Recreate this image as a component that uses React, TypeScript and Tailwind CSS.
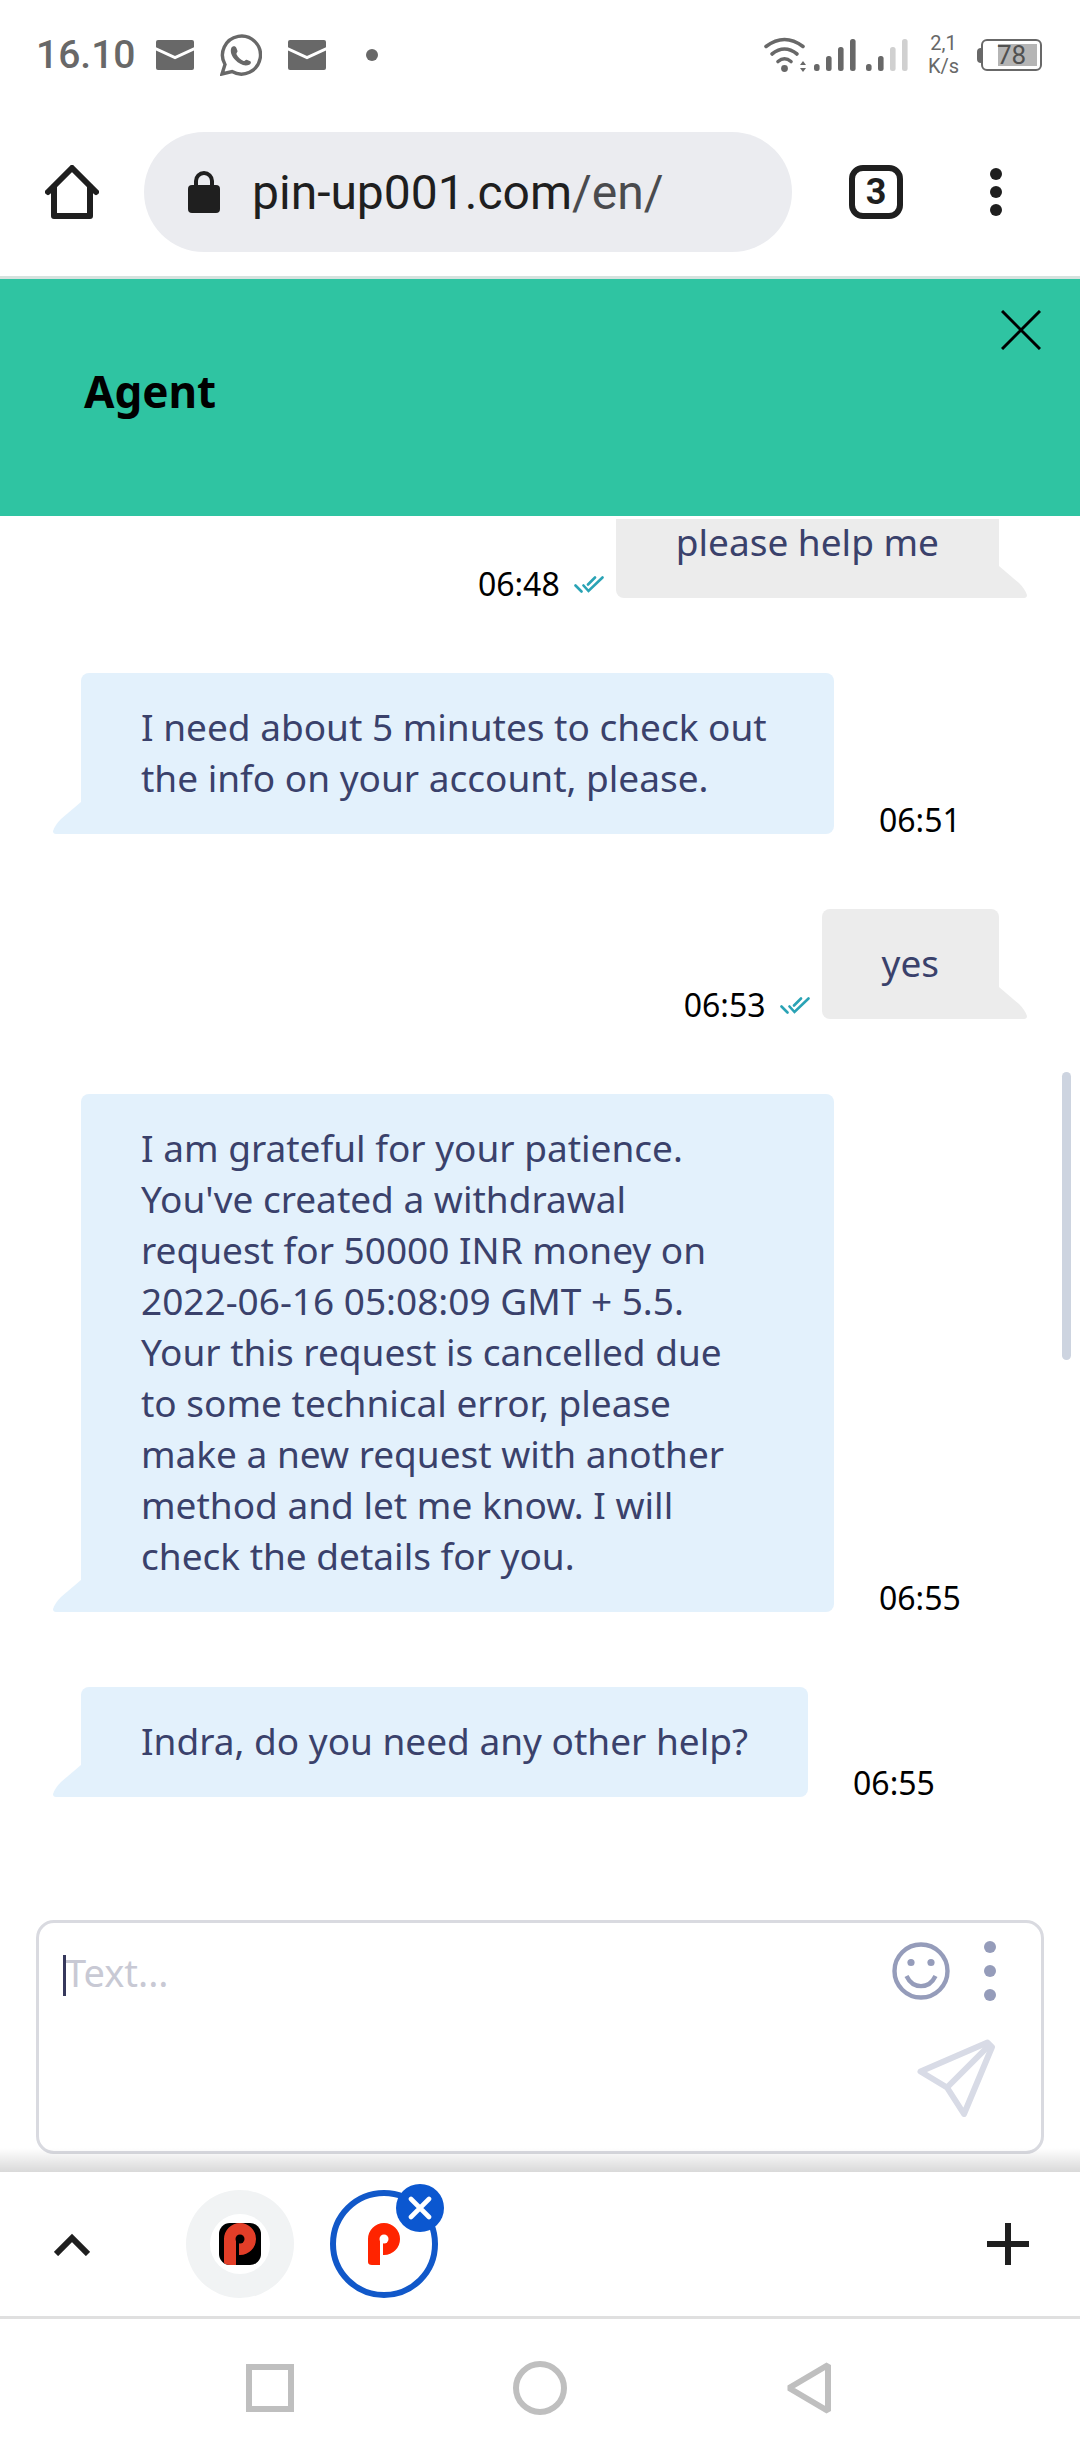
import type { ReactNode } from "react";

// Status Bar
// ━━━━━━━━━━━━━━━━━━━━━━━━━━━━━━━━━━━━━━━━━━━━━━━━━━━━━━━━━━━━━━━━━━━━━━

function MailIcon() {
  return (
    <svg className="w-[38px] h-[30px]" viewBox="0 0 38 30" fill="none">
      <rect width="38" height="30" rx="2" fill="#686868" />
      <path d="M-1 8.500L19 17.500L39 8.500" stroke="#fff" strokeWidth={3} />
    </svg>
  );
}

function WhatsAppIcon() {
  return (
    <svg className="w-[42px] h-[42px]" viewBox="0 0 42 42" fill="none">
      <path
        d="M2 40L5 30.500A19 19 0 1 1 12 37.500Z"
        stroke="#686868"
        strokeWidth={3.4}
      />
      <path
        d="M11.500 13.500c1.500-2 4.200-1.700 4.800.2l1.200 3.300c.4 1.200-1.500 2-1 3.200 1.500 3 4 5.500 7 6.800 1.100.4 2-1.700 3.200-1.300l3.600 1.600c1.200.8.6 2.600-1 3.400-4.800 2-10-.5-14-4.600-3.800-4-5.600-9-3.800-12.600z"
        fill="#686868"
      />
    </svg>
  );
}

function WifiIcon() {
  return (
    <svg className="w-[44px] h-[36px]" viewBox="0 0 44 36" fill="none">
      <g stroke="#686868" strokeWidth={3.6} strokeLinecap="round">
        <path d="M2 9.500Q20.500 -4.500 39 9.500" />
        <path d="M8 17Q20.500 7 33 17" />
        <path d="M14 24.500Q20.500 19 27 24.500" />
      </g>
      <circle cx="20.500" cy="31.500" r="3.400" fill="#686868" />
      <path d="M36 28l3-4 3 4zM36 31h6l-3 4z" fill="#686868" />
    </svg>
  );
}

function SignalIcon({ level }: { level: number }) {
  const heights = [7, 15, 24, 32];
  return (
    <svg className="w-[42px] h-[32px]" viewBox="0 0 42 32">
      {heights.map((h, i) => (
        <rect
          key={h}
          x={i * 12}
          y={32 - h}
          width="5.600"
          height={h}
          rx="2.500"
          fill={i < level ? "#686868" : "#d0d0d0"}
        />
      ))}
    </svg>
  );
}

function StatusBar() {
  return (
    <div className="flex h-[108px] shrink-0 items-center pt-[2px] pl-9 pr-[38px] font-[Roboto,sans-serif] text-[#686868]">
      <span className="text-[39px] leading-[48px] font-medium">16.10</span>
      <div className="ml-5 flex items-center gap-[26px]">
        <MailIcon />
        <WhatsAppIcon />
        <MailIcon />
      </div>
      <div className="ml-10 h-3 w-3 rounded-full bg-[#686868]" />
      <div className="ml-auto flex items-center">
        <WifiIcon />
        <div className="ml-[6px] flex items-center gap-[10px]">
          <SignalIcon level={4} />
          <SignalIcon level={2} />
        </div>
        <div className="ml-5 text-center text-[20px] leading-[23px]">
          <div>2,1</div>
          <div>K/s</div>
        </div>
        <div className="ml-[18px] flex items-center">
          <div className="h-[15px] w-1 rounded-l-sm bg-[#686868]" />
          <div className="relative h-8 w-[61px] rounded-md border-2 border-[#686868]">
            <div className="absolute inset-y-[3px] right-[3px] w-[39px] bg-[#b5b5b5]" />
            <div className="relative text-center text-[26px] leading-7 text-[#505050]">78</div>
          </div>
        </div>
      </div>
    </div>
  );
}

// Browser Toolbar
// ━━━━━━━━━━━━━━━━━━━━━━━━━━━━━━━━━━━━━━━━━━━━━━━━━━━━━━━━━━━━━━━━━━━━━━

function BrowserToolbar() {
  return (
    <div className="flex shrink-0 items-center border-b-[3px] border-[#d5e2de] py-6 pl-[45px] pr-[78px] font-[Roboto,sans-serif] text-[#1f1f1f]">
      <button type="button" aria-label="Home">
        <svg className="w-[54px] h-[54px]" viewBox="0 0 54 54" fill="none" stroke="currentColor" strokeWidth={6} strokeLinecap="round" strokeLinejoin="round">
          <path d="M3 27L27 3L51 27" />
          <path d="M9 22V51H45V22" />
        </svg>
      </button>
      <button type="button" className="ml-[45px] flex h-[120px] flex-1 items-center rounded-full bg-[#ebecf0] pl-11">
        <svg className="w-8 h-[42px]" viewBox="0 0 32 42" fill="none">
          <rect y="14" width="32" height="28" rx="4" fill="currentColor" />
          <path d="M8 16V10a8 8 0 0 1 16 0v6" stroke="currentColor" strokeWidth={4} />
        </svg>
        <span className="ml-8 pt-[2px] text-[48px] leading-[56px]">
          pin-up001.com<span className="text-[#4a4b4e]">/en/</span>
        </span>
      </button>
      <button type="button" aria-label="Tabs" className="ml-[57px] flex h-[54px] w-[54px] items-center justify-center rounded-[14px] border-6 border-[#1f1f1f] text-[36px] leading-[42px] font-bold">
        3
      </button>
      <button type="button" aria-label="Menu" className="ml-[87px] flex flex-col gap-[6px]">
        <span className="h-3 w-3 rounded-full bg-[#1f1f1f]" />
        <span className="h-3 w-3 rounded-full bg-[#1f1f1f]" />
        <span className="h-3 w-3 rounded-full bg-[#1f1f1f]" />
      </button>
    </div>
  );
}

// Chat
// ━━━━━━━━━━━━━━━━━━━━━━━━━━━━━━━━━━━━━━━━━━━━━━━━━━━━━━━━━━━━━━━━━━━━━━

interface Message {
  text: string;
  time: string;
  mine?: boolean;
}

const messages: Message[] = [
  { text: "please help me", time: "06:48", mine: true },
  { text: "I need about 5 minutes to check out the info on your account, please.", time: "06:51" },
  { text: "yes", time: "06:53", mine: true },
  {
    text: `I am grateful for your patience. You've created a withdrawal
request for 50000 INR money on
2022-06-16 05:08:09 GMT + 5.5.
Your this request is cancelled due
to some technical error, please
make a new request with another
method and let me know. I will
check the details for you.`,
    time: "06:55",
  },
  { text: "Indra, do you need any other help?", time: "06:55" },
];

function ChatHeader() {
  return (
    <header className="relative shrink-0 bg-[#2fc4a2] pt-20 pb-[93px] pl-[84px]">
      <h1 className="text-[44px] leading-[64px] font-bold text-black">Agent</h1>
      <button type="button" aria-label="Close" className="absolute top-[31px] right-[39px]">
        <svg className="w-10 h-10" viewBox="0 0 40 40" stroke="#000" strokeWidth={3}>
          <path d="M1 1L39 39M39 1L1 39" />
        </svg>
      </button>
    </header>
  );
}

function ReadTicks() {
  return (
    <svg className="w-[30px] h-[17px]" viewBox="0 0 30 17" fill="none" stroke="#2aa3b5" strokeWidth={2.6} strokeLinecap="round">
      <path d="M1.500 9.500L7.500 15.500M9.500 9.500L14.500 15L28.500 1.500M14 8.500L21 1.500" />
    </svg>
  );
}

function Bubble({ mine, children }: { mine?: boolean; children: ReactNode }) {
  return (
    <div
      className={`relative max-w-[753px] rounded-lg px-[60px] pt-7 pb-[31px] text-[37px] leading-[51px] whitespace-pre-line text-[#3a416b] ${
        mine ? "bg-[#ececec]" : "bg-[#e3f1fc]"
      }`}
    >
      {children}
      <svg
        className={`absolute bottom-0 h-8 w-9 ${mine ? "-right-7" : "-left-7 -scale-x-100"}`}
        viewBox="0 0 36 32"
        fill={mine ? "#ececec" : "#e3f1fc"}
      >
        <path d="M0 0H8L28 17Q34 23 36 29Q36 32 33 32H0z" />
      </svg>
    </div>
  );
}

function MessageRow({ text, time, mine }: Message) {
  if (mine) {
    return (
      <li className="flex items-end justify-end pr-[81px]">
        <span className="mr-[14px] text-[32px] leading-7 text-black">{time}</span>
        <span className="mr-3 flex pb-[5px]">
          <ReadTicks />
        </span>
        <Bubble mine>{text}</Bubble>
      </li>
    );
  }
  return (
    <li className="flex items-end pl-[81px]">
      <Bubble>{text}</Bubble>
      <span className="ml-[45px] text-[32px] leading-7 text-black">{time}</span>
    </li>
  );
}

function MessageList() {
  return (
    <div className="relative mt-[3px] flex min-h-0 flex-1 flex-col justify-end overflow-hidden">
      <ul className="flex flex-col gap-[75px] pb-[123px]">
        {messages.map((m, i) => (
          <MessageRow key={i} {...m} />
        ))}
      </ul>
      <div className="absolute top-[553px] right-[9px] h-[288px] w-[9px] rounded-full bg-[#cdd4e0]" />
    </div>
  );
}

function Composer() {
  return (
    <form className="relative mx-9 mb-[18px] flex h-[234px] shrink-0 rounded-[18px] border-3 border-[#d9dae0]">
      <textarea
        aria-label="Message"
        placeholder="Text..."
        className="flex-1 resize-none pt-6 pl-[26px] text-[38px] leading-[51px] text-[#3a416b] outline-none placeholder:text-[#c8c9d4]"
      />
      <div className="absolute top-8 left-6 h-[41px] w-[3px] bg-[#36385c]" />
      <div className="flex flex-col items-end pt-[18px] pr-[45px]">
        <div className="flex items-center gap-[34px]">
          <button type="button" aria-label="Emoji">
            <svg className="w-[58px] h-[58px]" viewBox="0 0 58 58" fill="none" stroke="#959cba" strokeWidth={4.4}>
              <circle cx="29" cy="29" r="26.500" />
              <circle cx="19" cy="20.500" r="3.600" fill="#959cba" stroke="none" />
              <circle cx="39" cy="20.500" r="3.600" fill="#959cba" stroke="none" />
              <path d="M14.500 34C21 47.500 37 47.500 43.500 34" />
            </svg>
          </button>
          <button type="button" aria-label="More" className="flex flex-col gap-3">
            <span className="h-3 w-3 rounded-full bg-[#959cba]" />
            <span className="h-3 w-3 rounded-full bg-[#959cba]" />
            <span className="h-3 w-3 rounded-full bg-[#959cba]" />
          </button>
        </div>
        <button type="submit" aria-label="Send" className="mt-[38px]">
          <svg className="w-[79px] h-[79px]" viewBox="0 0 79 79" fill="none" stroke="#d8dbe6" strokeWidth={6} strokeLinejoin="round">
            <path d="M3.500 32.500L70.500 3.500L75 8L47 75L30 48.500Z" />
            <path d="M30 48.500L72.500 6" />
          </svg>
        </button>
      </div>
    </form>
  );
}

// Browser Tab Strip
// ━━━━━━━━━━━━━━━━━━━━━━━━━━━━━━━━━━━━━━━━━━━━━━━━━━━━━━━━━━━━━━━━━━━━━━

function PinLogo({ color, hole }: { color: string; hole: string }) {
  return (
    <>
      <path d="M5 16a16 16 0 1 1 16 16h-4v10H9q-4 0-4-3z" fill={color} />
      <path d="M17 17h3v25h-3z" fill={hole} />
      <circle cx="21" cy="16" r="4.500" fill={hole} />
    </>
  );
}

function TabStrip() {
  return (
    <div className="relative flex h-[147px] shrink-0 items-center border-b-[3px] border-[#e0e0e0] bg-white pr-[51px] pl-[54px]">
      <div className="absolute inset-x-0 bottom-full h-6 bg-linear-to-t from-black/15 to-transparent" />
      <button type="button" aria-label="Expand tabs">
        <svg className="w-9 h-[23px]" viewBox="0 0 36 23" fill="none" stroke="#1f1f1f" strokeWidth={6}>
          <path d="M2 21L18 5L34 21" />
        </svg>
      </button>
      <button type="button" aria-label="Tab 1" className="ml-24 flex h-[108px] w-[108px] items-center justify-center rounded-full bg-[#f1f3f4]">
        <span className="flex h-[60px] w-[60px] items-center justify-center rounded-full bg-white">
          <svg className="w-[42px] h-[42px] rounded-[11px]" viewBox="0 0 42 42">
            <rect width="42" height="42" fill="#000" />
            <PinLogo color="#e23e28" hole="#000" />
          </svg>
        </span>
      </button>
      <div className="relative ml-9">
        <button type="button" aria-label="Tab 2" className="flex h-[108px] w-[108px] items-center justify-center rounded-full border-6 border-[#1158c9]">
          <svg className="w-[42px] h-[42px]" viewBox="0 0 42 42">
            <PinLogo color="#ff2400" hole="#fff" />
          </svg>
        </button>
        <button type="button" aria-label="Close tab" className="absolute -top-[6px] -right-[6px] flex h-12 w-12 items-center justify-center rounded-full bg-[#0b57d0]">
          <svg className="w-6 h-6" viewBox="0 0 24 24" stroke="#fff" strokeWidth={4.6} strokeLinecap="round">
            <path d="M3 3L21 21M21 3L3 21" />
          </svg>
        </button>
      </div>
      <button type="button" aria-label="New tab" className="ml-auto">
        <svg className="w-[42px] h-[42px]" viewBox="0 0 42 42" stroke="#1f1f1f" strokeWidth={6}>
          <path d="M21 0V42M0 21H42" />
        </svg>
      </button>
    </div>
  );
}

// System Navigation
// ━━━━━━━━━━━━━━━━━━━━━━━━━━━━━━━━━━━━━━━━━━━━━━━━━━━━━━━━━━━━━━━━━━━━━━

function SystemNav() {
  return (
    <nav className="flex h-[141px] shrink-0 items-center justify-center gap-[219px] pb-[3px]">
      <button type="button" aria-label="Recents" className="h-12 w-12 border-6 border-[#bfbfbf]" />
      <button type="button" aria-label="Home screen" className="h-[54px] w-[54px] rounded-full border-6 border-[#bfbfbf]" />
      <button type="button" aria-label="Back" className="flex w-12">
        <svg className="w-[46px] h-[54px]" viewBox="0 0 46 54" fill="none" stroke="#bfbfbf" strokeWidth={6} strokeLinejoin="bevel">
          <path d="M3 27L42 4V50Z" />
        </svg>
      </button>
    </nav>
  );
}

export default function App() {
  return (
    <div className="flex h-screen flex-col overflow-hidden bg-white font-['Noto_Sans',sans-serif]">
      <StatusBar />
      <BrowserToolbar />
      <ChatHeader />
      <MessageList />
      <Composer />
      <TabStrip />
      <SystemNav />
    </div>
  );
}
